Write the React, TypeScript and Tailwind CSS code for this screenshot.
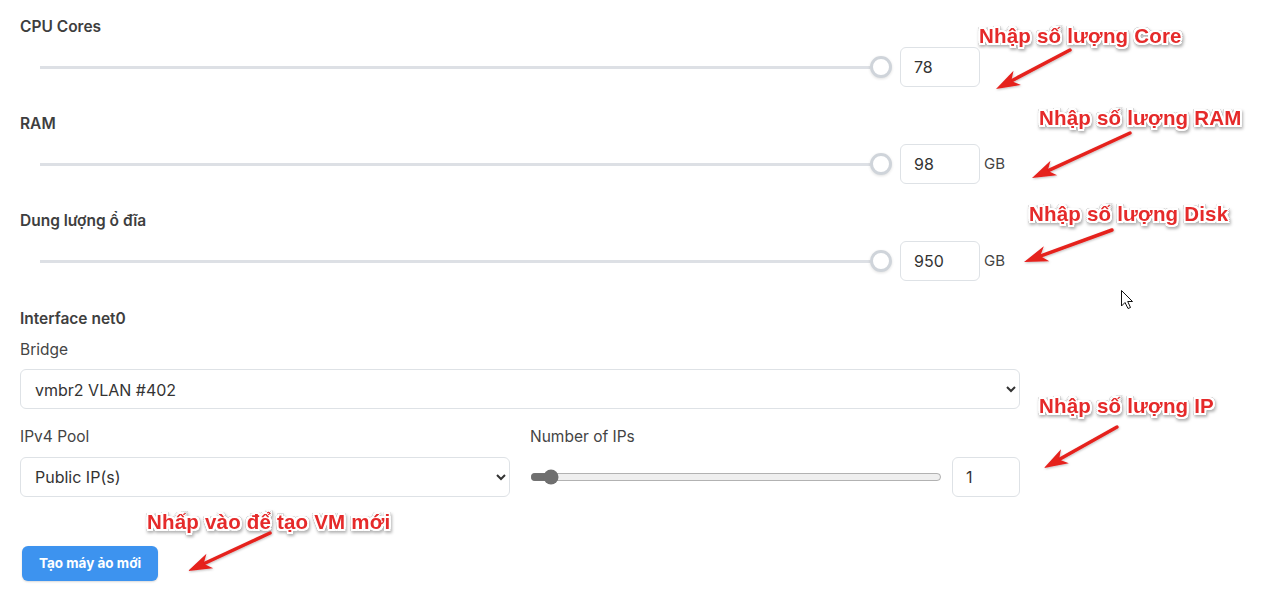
import React from "react";

type Arrow = { x1: number; y1: number; x2: number; y2: number };

const arrows: Arrow[] = [
  { x1: 1070, y1: 50, x2: 996, y2: 89 },
  { x1: 1130, y1: 133, x2: 1032, y2: 178 },
  { x1: 1112, y1: 230, x2: 1024, y2: 262 },
  { x1: 1117, y1: 427, x2: 1044, y2: 468 },
  { x1: 270, y1: 533, x2: 188, y2: 571 },
];

const notes = [
  { text: "Nhập số lượng Core", left: 979, top: 26 },
  { text: "Nhập số lượng RAM", left: 1039, top: 108 },
  { text: "Nhập số lượng Disk", left: 1029, top: 204 },
  { text: "Nhập số lượng IP", left: 1039, top: 396 },
  { text: "Nhấp vào để tạo VM mới", left: 147, top: 512 },
];

const ArrowShape = ({ x1, y1, x2, y2 }: Arrow) => {
  const len = Math.hypot(x2 - x1, y2 - y1);
  const ux = (x2 - x1) / len;
  const uy = (y2 - y1) / len;
  const nx = -uy;
  const ny = ux;
  const L = 24;
  const W = 8;
  const bx = x2 - ux * L;
  const by = y2 - uy * L;
  const mx = x2 - ux * L * 0.72;
  const my = y2 - uy * L * 0.72;
  const pts = [
    [x2, y2],
    [bx + nx * W, by + ny * W],
    [mx, my],
    [bx - nx * W, by - ny * W],
  ]
    .map((p) => p.join(","))
    .join(" ");
  return (
    <g>
      <line x1={x1} y1={y1} x2={mx} y2={my} stroke="#e5201f" strokeWidth={3.5} strokeLinecap="round" />
      <polygon points={pts} fill="#e5201f" />
    </g>
  );
};

const SliderRow = ({ value, unit }: { value: string; unit?: string }) => (
  <div className="flex items-center h-10">
    <div className="w-[872px] flex items-center pl-5">
      <div className="flex-1 h-[3px] bg-[#dde0e5]" />
      <div className="w-[22px] h-[22px] rounded-full border-[3px] border-[#cfd4da] bg-white shadow-[0_1px_3px_rgba(0,0,0,0.12)]" />
    </div>
    <input
      readOnly
      value={value}
      className="ml-2 w-20 h-10 rounded-md border border-[#dee2e6] px-[13px] text-base text-[#333] bg-white outline-none"
    />
    {unit && <span className="ml-1 mt-px text-[15px] text-[#444]">{unit}</span>}
  </div>
);

const App = () => {
  return (
    <div className="relative min-h-screen bg-white font-['Inter',sans-serif] text-[#444]">
      <div className="w-[1040px] px-5 pt-[14px]">
        <div className="h-6 pt-px leading-6 text-[15.5px] font-semibold text-[#3e3e3e] mb-[9px]">CPU Cores</div>
        <SliderRow value="78" />

        <div className="mt-6 h-6 pt-px leading-6 text-[15.5px] font-semibold text-[#3e3e3e] mb-[9px]">RAM</div>
        <SliderRow value="98" unit="GB" />

        <div className="mt-6 h-6 pt-px leading-6 text-[15.5px] font-semibold text-[#3e3e3e] mb-[9px]">Dung lượng ổ đĩa</div>
        <SliderRow value="950" unit="GB" />

        <div className="mt-[25px] h-6 pt-px leading-6 text-[15.5px] font-semibold text-[#3e3e3e]">Interface net0</div>
        <div className="mt-[7px] h-6 pt-px leading-6 text-[15.5px] text-[#444]">Bridge</div>
        <select className="mt-2 w-full h-10 rounded-md border border-[#dee2e6] pl-[10px] pr-2 pt-px text-base text-[#333] bg-white">
          <option>vmbr2 VLAN #402</option>
        </select>

        <div className="grid grid-cols-2 gap-5 mt-[15px]">
          <div>
            <div className="h-6 pt-px leading-6 text-[15.5px] text-[#444]">IPv4 Pool</div>
            <select className="mt-[9px] w-full h-10 rounded-md border border-[#dee2e6] pl-[10px] pr-2 text-base text-[#333] bg-white">
              <option>Public IP(s)</option>
            </select>
          </div>
          <div>
            <div className="h-6 pt-px leading-6 text-[15.5px] text-[#444]">Number of IPs</div>
            <div className="mt-[9px] flex items-center h-10">
              <input
                type="range"
                min={0}
                max={30}
                defaultValue={1}
                className="flex-1 w-full accent-[#6f6f6f]"
              />
              <input
                readOnly
                value="1"
                className="ml-[10px] w-[68px] h-10 rounded-md border border-[#dee2e6] px-[13px] text-base text-[#333] bg-white outline-none"
              />
            </div>
          </div>
        </div>

        <button className="mt-[49px] ml-[2px] w-[136px] h-[35px] rounded-md bg-[#3d93ef] text-white text-[13.5px] font-bold shadow-[0_1px_2px_rgba(0,0,0,0.15)]">
          Tạo máy ảo mới
        </button>
      </div>

      {notes.map((n) => (
        <span
          key={n.text}
          style={{ left: n.left, top: n.top }}
          className="absolute whitespace-nowrap leading-5 text-[20.5px] font-bold tracking-[0.2px] text-[#e52a2a] font-['Liberation_Sans',Arial,sans-serif] [text-shadow:2px_0_#fff,-2px_0_#fff,0_2px_#fff,0_-2px_#fff,2px_2px_#fff,-2px_-2px_#fff,2px_-2px_#fff,-2px_2px_#fff] [filter:drop-shadow(0_0_0.6px_rgba(0,0,0,0.55))_drop-shadow(1px_2px_1.5px_rgba(0,0,0,0.3))]"
        >
          {n.text}
        </span>
      ))}

      <svg className="absolute inset-0 pointer-events-none" width="1278" height="602">
        <defs>
          <filter id="sh" x="-20%" y="-20%" width="140%" height="140%">
            <feDropShadow dx="0.5" dy="1" stdDeviation="0.8" floodColor="#000" floodOpacity="0.25" />
          </filter>
        </defs>
        <g filter="url(#sh)">
          {arrows.map((a, i) => (
            <ArrowShape key={i} {...a} />
          ))}
        </g>
        {/* mouse pointer */}
        <path
          d="M1121.5 290.5 L1121.5 306 L1125 302.5 L1128 308.5 L1130.5 307.5 L1127.7 301.5 L1132.5 301.5 Z"
          fill="#fff"
          stroke="#111"
          strokeWidth={1}
          strokeLinejoin="round"
        />
      </svg>
    </div>
  );
};

export default App;
